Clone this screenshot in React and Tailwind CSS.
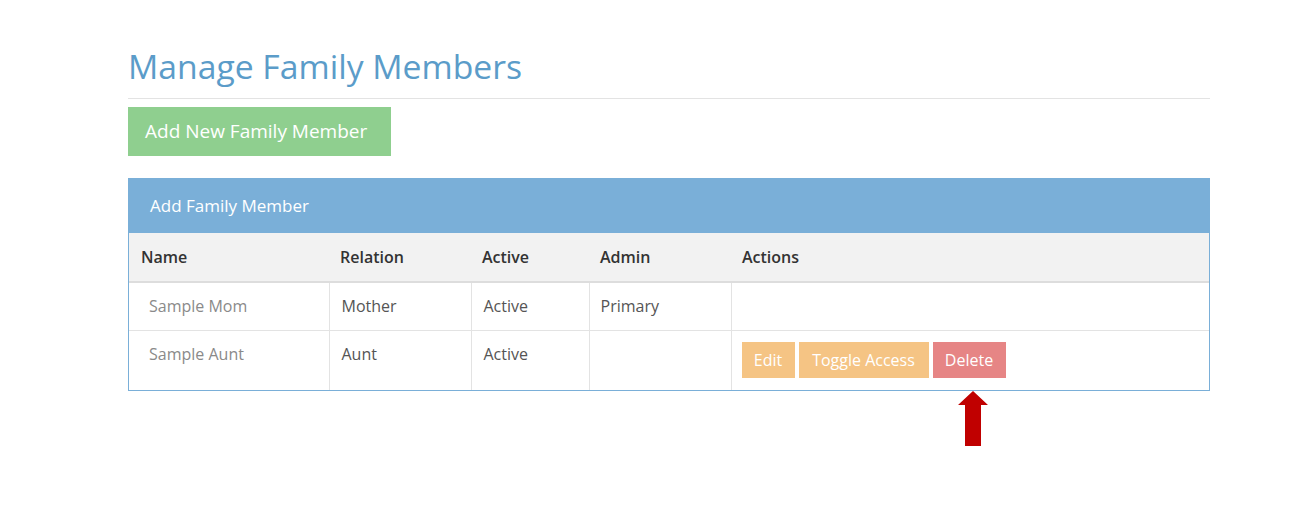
export default function App() {
  const rows = [
    { name: 'Sample Mom', relation: 'Mother', active: 'Active', admin: 'Primary', actions: false },
    { name: 'Sample Aunt', relation: 'Aunt', active: 'Active', admin: '', actions: true },
  ];

  return (
    <div className="min-h-[518px] bg-white font-['Open_Sans',sans-serif]">
      <div className="mx-[128px] pt-[44px] w-[1082px]">
        <h1 className="text-[33.7px] leading-[44px] text-[#5b9cc9] font-normal pb-[10px] border-b border-[#e3e3e3]">
          Manage Family Members
        </h1>
        <button className="mt-[8px] h-[49px] w-[263px] pl-[17px] text-left bg-[#8fcf8f] text-white text-[19px] leading-none">
          Add New Family Member
        </button>

        <div className="mt-[22px] border border-[#7aafd8]">
          <div className="h-[54px] bg-[#7aafd8] text-white text-[17px] flex items-center pl-[21px]">
            Add Family Member
          </div>
          <table className="w-full border-collapse table-fixed text-[16px]">
            <colgroup>
              <col className="w-[200px]" />
              <col className="w-[142px]" />
              <col className="w-[118px]" />
              <col className="w-[142px]" />
              <col />
            </colgroup>
            <thead>
              <tr className="bg-[#f2f2f2] border-b-2 border-[#dddddd] text-[#333] text-left">
                <th className="h-[49px] pl-[12px] font-semibold">Name</th>
                <th className="pl-[11px] font-semibold">Relation</th>
                <th className="pl-[11px] font-semibold">Active</th>
                <th className="pl-[11px] font-semibold">Admin</th>
                <th className="pl-[11px] font-semibold">Actions</th>
              </tr>
            </thead>
            <tbody>
              {rows.map((r, i) => (
                <tr key={r.name} className={i === 0 ? 'border-b border-[#e3e3e3]' : ''}>
                  <td className="align-top pt-[11px] pb-[12px] pl-[20px] text-[#8a8a8a] border-r border-[#e3e3e3]">
                    {r.name}
                  </td>
                  <td className="align-top pt-[11px] pl-[12px] text-[#555] border-r border-[#e3e3e3]">{r.relation}</td>
                  <td className="align-top pt-[11px] pl-[12px] text-[#555] border-r border-[#e3e3e3]">{r.active}</td>
                  <td className="align-top pt-[11px] pl-[11px] text-[#555] border-r border-[#e3e3e3]">{r.admin}</td>
                  <td className={i === 0 ? 'h-[48px]' : 'pl-[10px] pt-[11px] pb-[12px]'}>
                    {r.actions && (
                      <div className="flex gap-[4px]">
                        <button className="h-[36px] w-[53px] bg-[#f5c484] text-white text-[16px]">Edit</button>
                        <button className="h-[36px] w-[130px] bg-[#f5c484] text-white text-[16px]">Toggle Access</button>
                        <button className="h-[36px] w-[73px] bg-[#e68585] text-white text-[16px]">Delete</button>
                      </div>
                    )}
                  </td>
                </tr>
              ))}
            </tbody>
          </table>
        </div>

        <div className="flex">
          <svg className="ml-[830px]" width="30" height="55" viewBox="0 0 30 55">
            <polygon points="15,0 30,14 23,14 23,55 7,55 7,14 0,14" fill="#c00000" />
          </svg>
        </div>
      </div>
    </div>
  );
}
